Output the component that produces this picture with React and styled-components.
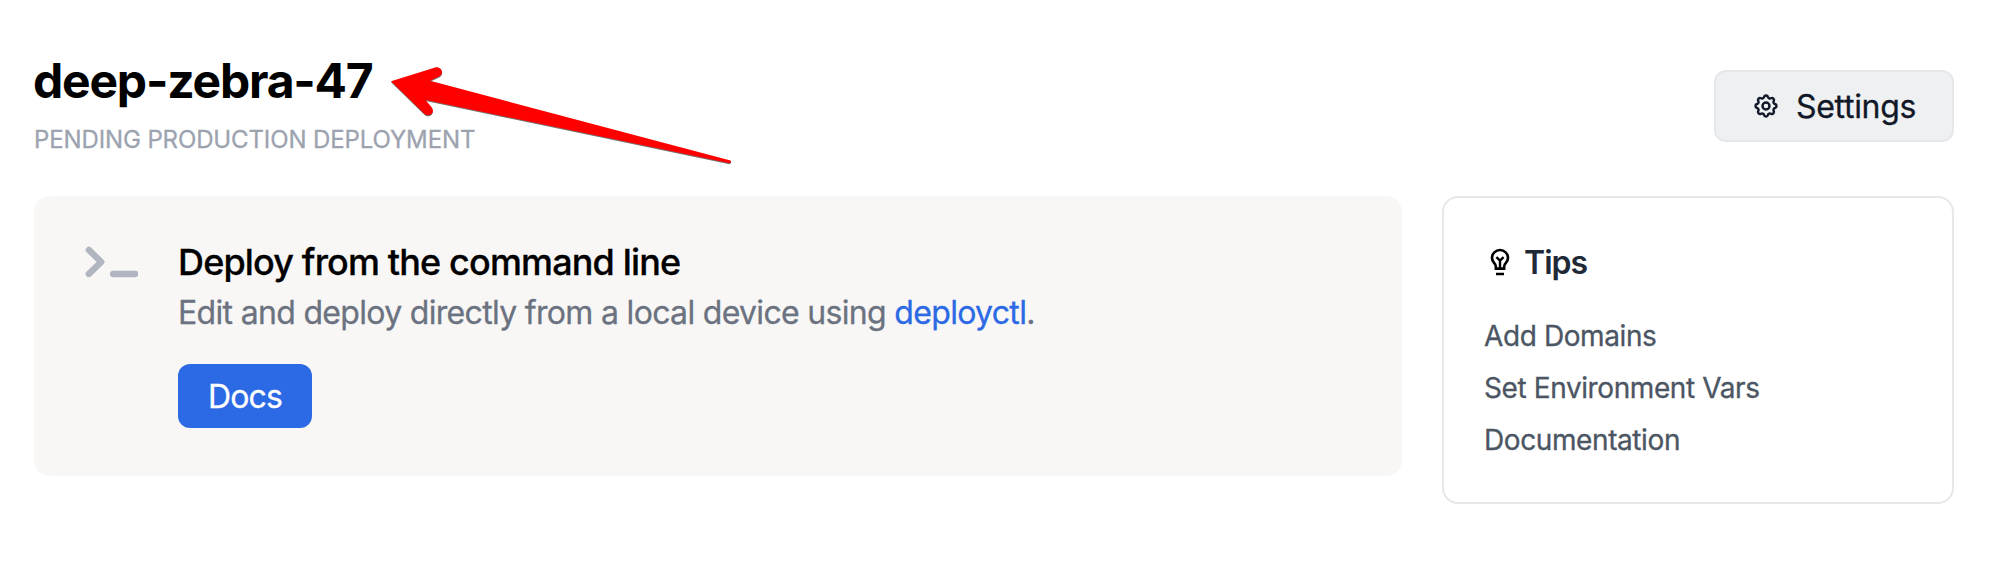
import React from "react";
import styled, { createGlobalStyle } from "styled-components";

const GlobalStyle = createGlobalStyle`
  *, *::before, *::after { box-sizing: border-box; }
  body {
    margin: 0;
    background: #fff;
    font-family: Inter, "Liberation Sans", sans-serif;
    font-size: 32px;
  }
  h1, h2, h3, p, ul { margin: 0; padding: 0; }
`;

const Page = styled.main`
  position: relative;
  width: 2008px;
  height: 570px;
  padding: 52px 54px 0 34px;
  overflow: hidden;
`;

const Header = styled.header`
  display: flex;
  justify-content: space-between;
  height: 144px;
`;

const ProjectName = styled.h1`
  margin-left: -1px;
  font-size: 48px;
  line-height: 57px;
  font-weight: 700;
  letter-spacing: -1.2px;
  color: #000;
`;

const Status = styled.p`
  margin-top: 15px;
  font-size: 24px;
  line-height: 32px;
  letter-spacing: -0.12px;
  color: #9ca3af;
  -webkit-text-stroke: 0.3px currentColor;
`;

const SettingsButton = styled.button`
  display: flex;
  align-items: center;
  gap: 16px;
  width: 240px;
  height: 72px;
  margin-top: 18px;
  padding: 0 0 0 36px;
  border: 2px solid #e5e7eb;
  border-radius: 12px;
  background: #eff0f2;
  color: #111827;
  font: inherit;
  letter-spacing: -0.3px;
  -webkit-text-stroke: 0.3px currentColor;
`;

const Columns = styled.div`
  display: flex;
  align-items: flex-start;
  gap: 40px;
`;

const DeployCard = styled.section`
  display: flex;
  gap: 40px;
  width: 1368px;
  height: 280px;
  padding: 42px 48px;
  border-radius: 16px;
  background: #f8f7f6;
`;

const DeployTitle = styled.h2`
  font-size: 36px;
  line-height: 48px;
  font-weight: 500;
  letter-spacing: -0.85px;
  color: #000;
  -webkit-text-stroke: 0.3px currentColor;
`;

const DeployText = styled.p`
  margin-top: 7px;
  line-height: 40px;
  letter-spacing: -0.68px;
  color: #6b7280;
  -webkit-text-stroke: 0.3px currentColor;
`;

const InlineLink = styled.a`
  color: #2c69e4;
  -webkit-text-stroke: 0.3px currentColor;
`;

const DocsButton = styled.button`
  display: block;
  width: 134px;
  height: 64px;
  margin-top: 31px;
  padding: 0;
  border: 0;
  border-radius: 12px;
  background: #2c69e4;
  color: #fff;
  font: inherit;
  letter-spacing: -0.9px;
  -webkit-text-stroke: 0.3px currentColor;
`;

const TipsCard = styled.aside`
  width: 512px;
  height: 308px;
  padding: 44px 40px;
  border: 2px solid #e5e7eb;
  border-radius: 16px;
`;

const TipsTitle = styled.h3`
  display: flex;
  align-items: center;
  gap: 8px;
  height: 40px;
  font-size: 32px;
  font-weight: 600;
  letter-spacing: -1px;
  color: #1f2937;

  svg { color: #000; }
`;

const TipsList = styled.ul`
  margin-top: 28px;
  list-style: none;
`;

const Tip = styled.li`
  font-size: 28px;
  line-height: 52px;
  letter-spacing: -0.4px;
  color: #4b5563;
  -webkit-text-stroke: 0.3px currentColor;
`;

const Pointer = styled.svg`
  position: absolute;
  left: 380px;
  top: 56px;
  filter: drop-shadow(0 1px 0.6px rgba(0, 0, 0, 0.55));
`;

function GearIcon() {
  return (
    <svg width="28" height="28" viewBox="0 0 24 24" fill="none" stroke="currentColor" strokeWidth="2.1" strokeLinecap="round" strokeLinejoin="round">
      <path d="M10.325 4.317c.426-1.756 2.924-1.756 3.35 0a1.724 1.724 0 0 0 2.573 1.066c1.543-.94 3.31.826 2.37 2.37a1.724 1.724 0 0 0 1.065 2.572c1.756.426 1.756 2.924 0 3.35a1.724 1.724 0 0 0-1.066 2.573c.94 1.543-.826 3.31-2.37 2.37a1.724 1.724 0 0 0-2.572 1.065c-.426 1.756-2.924 1.756-3.35 0a1.724 1.724 0 0 0-2.573-1.066c-1.543.94-3.31-.826-2.37-2.37a1.724 1.724 0 0 0-1.065-2.572c-1.756-.426-1.756-2.924 0-3.35a1.724 1.724 0 0 0 1.066-2.573c-.94-1.543.826-3.31 2.37-2.37 1 .608 2.296.07 2.572-1.065z" />
      <circle cx="12" cy="12" r="3" />
    </svg>
  );
}

function BulbIcon() {
  return (
    <svg width="32" height="32" viewBox="0 0 24 24" fill="none" stroke="currentColor" strokeWidth="2">
      <path d="M8.900 17v-1.600c0-1.100-.5-1.700-1.200-2.500C6.700 11.800 6 10.700 6 9a6 6 0 0 1 12 0c0 1.700-.7 2.800-1.700 3.900-.7.8-1.200 1.400-1.200 2.500V17zM9 21h6" />
      <path d="M9.300 8.300 12 11l2.700-2.700M12 10.600V17" strokeWidth="1.800" />
    </svg>
  );
}

function TerminalIcon() {
  return (
    <svg width="56" height="48" viewBox="0 0 56 48" fill="none" stroke="#b0b5bf" strokeWidth="6.4" strokeLinecap="round" strokeLinejoin="round">
      <path d="M6.9 11.9 19.2 24 6.9 35.9" />
      <path d="M31.2 36h22" />
    </svg>
  );
}

function ArrowPointer() {
  return (
    <Pointer width="364" height="120" viewBox="380 56 364 120">
      <path
        fill="#fe0000"
        d="M391 81.2 435.2 67.4C441.5 66 445 74 438.8 76.8L430 80.7 730.5 160.6Q732 162.5 729.5 163.2L425.5 100 431.8 107.6C435.5 113 429 118 424.3 113.7Z"
      />
    </Pointer>
  );
}

const tips = ["Add Domains", "Set Environment Vars", "Documentation"];

export default function App() {
  return (
    <>
      <GlobalStyle />
      <Page>
        <Header>
          <div>
            <ProjectName>deep-zebra-47</ProjectName>
            <Status>PENDING PRODUCTION DEPLOYMENT</Status>
          </div>
          <SettingsButton>
            <GearIcon />
            Settings
          </SettingsButton>
        </Header>
        <Columns>
          <DeployCard>
            <TerminalIcon />
            <div>
              <DeployTitle>Deploy from the command line</DeployTitle>
              <DeployText>
                Edit and deploy directly from a local device using <InlineLink>deployctl</InlineLink>.
              </DeployText>
              <DocsButton>Docs</DocsButton>
            </div>
          </DeployCard>
          <TipsCard>
            <TipsTitle>
              <BulbIcon />
              Tips
            </TipsTitle>
            <TipsList>
              {tips.map((tip) => (
                <Tip key={tip}>{tip}</Tip>
              ))}
            </TipsList>
          </TipsCard>
        </Columns>
        <ArrowPointer />
      </Page>
    </>
  );
}
